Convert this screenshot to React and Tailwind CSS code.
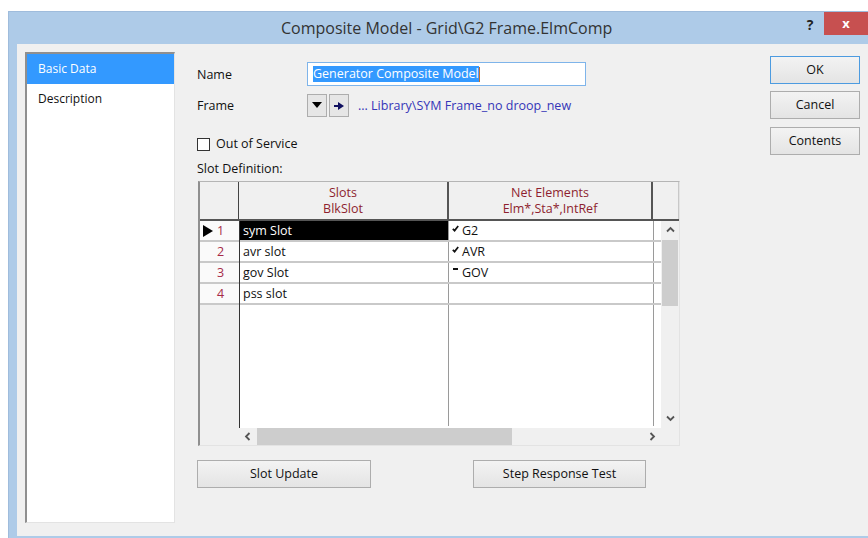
import React from "react";

const font = { fontFamily: '"Open Sans", "Noto Sans", "Liberation Sans", sans-serif' };

function Check() {
  return (
    <svg width="7" height="7" viewBox="0 0 7 7" className="shrink-0">
      <path d="M0.8 3.8 L2.6 5.6 L6.2 0.9" fill="none" stroke="#111" strokeWidth="1.7" />
    </svg>
  );
}

function Dash() {
  return (
    <svg width="7" height="7" viewBox="0 0 7 7" className="shrink-0">
      <rect x="1" y="1" width="5" height="2" fill="#111" />
    </svg>
  );
}

function Chevron({ dir }) {
  const d = {
    up: "M1 5.5 L4.5 2 L8 5.5",
    down: "M1 2.5 L4.5 6 L8 2.5",
    left: "M5.5 1 L2 4.5 L5.5 8",
    right: "M2.5 1 L6 4.5 L2.5 8",
  }[dir];
  return (
    <svg width="9" height="9" viewBox="0 0 9 9">
      <path d={d} fill="none" stroke="#555" strokeWidth="1.8" />
    </svg>
  );
}

function WinButton({ children, className = "" }) {
  return (
    <div
      className={
        "flex items-center justify-center border text-[12.5px] text-[#111] bg-gradient-to-b from-[#f3f3f3] to-[#e4e4e4] " +
        className
      }
    >
      {children}
    </div>
  );
}

const rows = [
  { n: "1", slot: "sym Slot", net: "G2", mark: "check", sel: true },
  { n: "2", slot: "avr slot", net: "AVR", mark: "check" },
  { n: "3", slot: "gov Slot", net: "GOV", mark: "dash" },
  { n: "4", slot: "pss slot", net: "", mark: null },
];

function SlotGrid() {
  return (
    <div className="ml-[1px] mt-[4px] w-[482px] h-[265px] bg-[#f0f0f0] border-l-2 border-t border-l-[#8f8f8f] border-t-[#b5b5b5] border-r border-b border-r-[#e3e3e3] border-b-[#e3e3e3] flex flex-col">
      {/* header */}
      <div className="flex h-[39px] border-b-2 border-[#555] shrink-0">
        <div className="w-[39px] border-r border-[#444] shrink-0" />
        <div className="w-[210px] border-r-2 border-[#555] shrink-0 flex flex-col items-center justify-center leading-[16px] text-[12.5px] text-[#8e1f2f]">
          <span>Slots</span>
          <span>BlkSlot</span>
        </div>
        <div className="w-[204px] border-r-2 border-[#555] shrink-0 flex flex-col items-center justify-center leading-[16px] text-[12.5px] text-[#8e1f2f]">
          <span>Net Elements</span>
          <span>Elm*,Sta*,IntRef</span>
        </div>
        <div className="flex-1 border-r border-[#c8c8c8]" />
      </div>
      {/* body */}
      <div className="flex flex-1">
        <div className="flex flex-col w-[461px]">
          <div className="h-[207px] flex">
            <div className="w-[40px] shrink-0 border-r border-[#333] flex flex-col">
              {rows.map((r) => (
                <div
                  key={r.n}
                  className="h-[21px] bg-[#fafafa] border-b-2 border-[#c9c9c9] flex items-center relative text-[12.5px] text-[#a62a48]"
                >
                  {r.sel && (
                    <svg width="10" height="12" viewBox="0 0 10 12" className="absolute left-[3px] top-[4px]">
                      <polygon points="0,0 10,6 0,12" fill="#000" />
                    </svg>
                  )}
                  <span className="w-full text-center pl-[2px] pt-[2px]">{r.n}</span>
                </div>
              ))}
            </div>
            <div className="flex-1 bg-white flex flex-col">
              {rows.map((r) => (
                <div key={r.n} className="h-[21px] flex border-b-2 border-[#c9c9c9] text-[12.5px] text-[#111]">
                  <div
                    className={
                      "w-[209px] shrink-0 border-r border-[#9a9a9a] flex items-center pl-[3px] pt-[2px] " +
                      (r.sel ? "bg-black text-white" : "")
                    }
                  >
                    {r.slot}
                  </div>
                  <div className="w-[205px] shrink-0 border-r border-[#9a9a9a] flex items-center pl-[3px] pt-[2px]">
                    {r.mark && (
                      <span className="self-start mt-[2px] mr-[3px]">
                        {r.mark === "check" ? <Check /> : <Dash />}
                      </span>
                    )}
                    {r.net}
                  </div>
                  <div className="flex-1" />
                </div>
              ))}
              <div className="flex flex-1">
                <div className="w-[209px] shrink-0 border-r border-[#9a9a9a] mb-[2px]" />
                <div className="w-[205px] shrink-0 border-r border-[#9a9a9a] mb-[2px]" />
              </div>
            </div>
          </div>
          {/* horizontal scrollbar */}
          <div className="h-[17px] flex">
            <div className="w-[40px] shrink-0" />
            <div className="flex-1 flex items-center">
              <div className="w-[17px] flex justify-center">
                <Chevron dir="left" />
              </div>
              <div className="w-[255px] h-[17px] bg-[#cdcdcd]" />
              <div className="flex-1" />
              <div className="w-[17px] flex justify-center">
                <Chevron dir="right" />
              </div>
            </div>
          </div>
        </div>
        {/* vertical scrollbar */}
        <div className="w-[18px] flex flex-col">
          <div className="h-[19px] flex items-center justify-center">
            <Chevron dir="up" />
          </div>
          <div className="h-[66px] mx-[1px] bg-[#cdcdcd]" />
          <div className="flex-1" />
          <div className="h-[19px] flex items-center justify-center mb-[17px]">
            <Chevron dir="down" />
          </div>
        </div>
      </div>
    </div>
  );
}

export default function App() {
  return (
    <div className="w-[868px] h-[538px] bg-white overflow-hidden" style={font}>
      <div className="ml-[8px] mt-[11px] w-[860px] h-[527px] bg-[#aecbe8] border-l border-t border-[#9fbcdc] flex flex-col">
        {/* title bar */}
        <div className="h-[32px] flex items-start shrink-0">
          <div className="ml-[272px] mt-[4px] text-[16px] text-[#333]">
            Composite Model - Grid\G2 Frame.ElmComp
          </div>
          <div className="flex-1" />
          <div className="w-[28px] mt-[2px] text-[14px] font-bold text-[#222] text-center">?</div>
          <div className="w-[44px] h-[23px] bg-[#c75050] flex items-center justify-center text-white text-[13px] font-bold">
            x
          </div>
        </div>
        {/* client area */}
        <div className="ml-[8px] mb-[2px] flex-1 bg-[#f0f0f0] flex pl-[8px] pt-[8px]">
          {/* page list */}
          <div className="w-[150px] h-[471px] bg-white border-l-2 border-t-2 border-l-[#8f8f8f] border-t-[#8f8f8f] border-r border-b border-r-[#e3e3e3] border-b-[#e3e3e3] text-[12px] flex flex-col">
            <div className="h-[30px] bg-[#3399ff] text-white flex items-center pl-[11px]">Basic Data</div>
            <div className="h-[30px] text-[#111] flex items-center pl-[11px]">Description</div>
          </div>

          {/* main column */}
          <div className="ml-[22px] w-[483px] flex flex-col text-[12.5px] text-[#111]">
            <div className="mt-[10px] h-[24px] flex items-center">
              <div className="w-[110px] pt-[2px]">Name</div>
              <div className="w-[279px] h-[24px] bg-white border border-[#7eb4ea] flex items-center pl-[5px]">
                <span className="bg-[#3399ff] text-white leading-[16px]">Generator Composite Model</span>
                <span className="w-[1px] h-[15px] bg-[#c07030]" />
              </div>
            </div>
            <div className="mt-[8px] h-[23px] flex items-center">
              <div className="w-[110px] pt-[2px]">Frame</div>
              <div className="w-[20px] h-[23px] border border-[#adadad] bg-[#e6e6e6] flex items-center justify-center">
                <svg width="10" height="7" viewBox="0 0 10 7">
                  <polygon points="0,0 10,0 5,6" fill="#000" />
                </svg>
              </div>
              <div className="ml-[2px] w-[20px] h-[23px] border border-[#adadad] bg-[#e6e6e6] flex items-center justify-center">
                <svg width="10" height="8" viewBox="0 0 10 8">
                  <rect x="0" y="3" width="5" height="2" fill="#101060" />
                  <polygon points="4,0 10,4 4,8" fill="#101060" />
                </svg>
              </div>
              <div className="ml-[9px] pt-[2px] text-[#3535b8]">... Library\SYM Frame_no droop_new</div>
            </div>
            <div className="mt-[19px] h-[16px] flex items-center">
              <div className="w-[13px] h-[13px] bg-white border border-[#333]" />
              <div className="ml-[6px]">Out of Service</div>
            </div>
            <div className="mt-[9px] h-[16px] flex items-center">Slot Definition:</div>

            <SlotGrid />

            <div className="mt-[14px] flex">
              <WinButton className="w-[174px] h-[28px] border-[#adadad]">Slot Update</WinButton>
              <WinButton className="ml-[102px] w-[173px] h-[28px] border-[#adadad]">Step Response Test</WinButton>
            </div>
          </div>

          {/* dialog buttons */}
          <div className="ml-[90px] flex flex-col">
            <WinButton className="mt-[4px] w-[90px] h-[28px] border-[#4c9be0] from-[#eef3f8] to-[#e3ebf3]">OK</WinButton>
            <WinButton className="mt-[7px] w-[90px] h-[28px] border-[#adadad]">Cancel</WinButton>
            <WinButton className="mt-[8px] w-[90px] h-[28px] border-[#adadad]">Contents</WinButton>
          </div>
        </div>
      </div>
    </div>
  );
}
